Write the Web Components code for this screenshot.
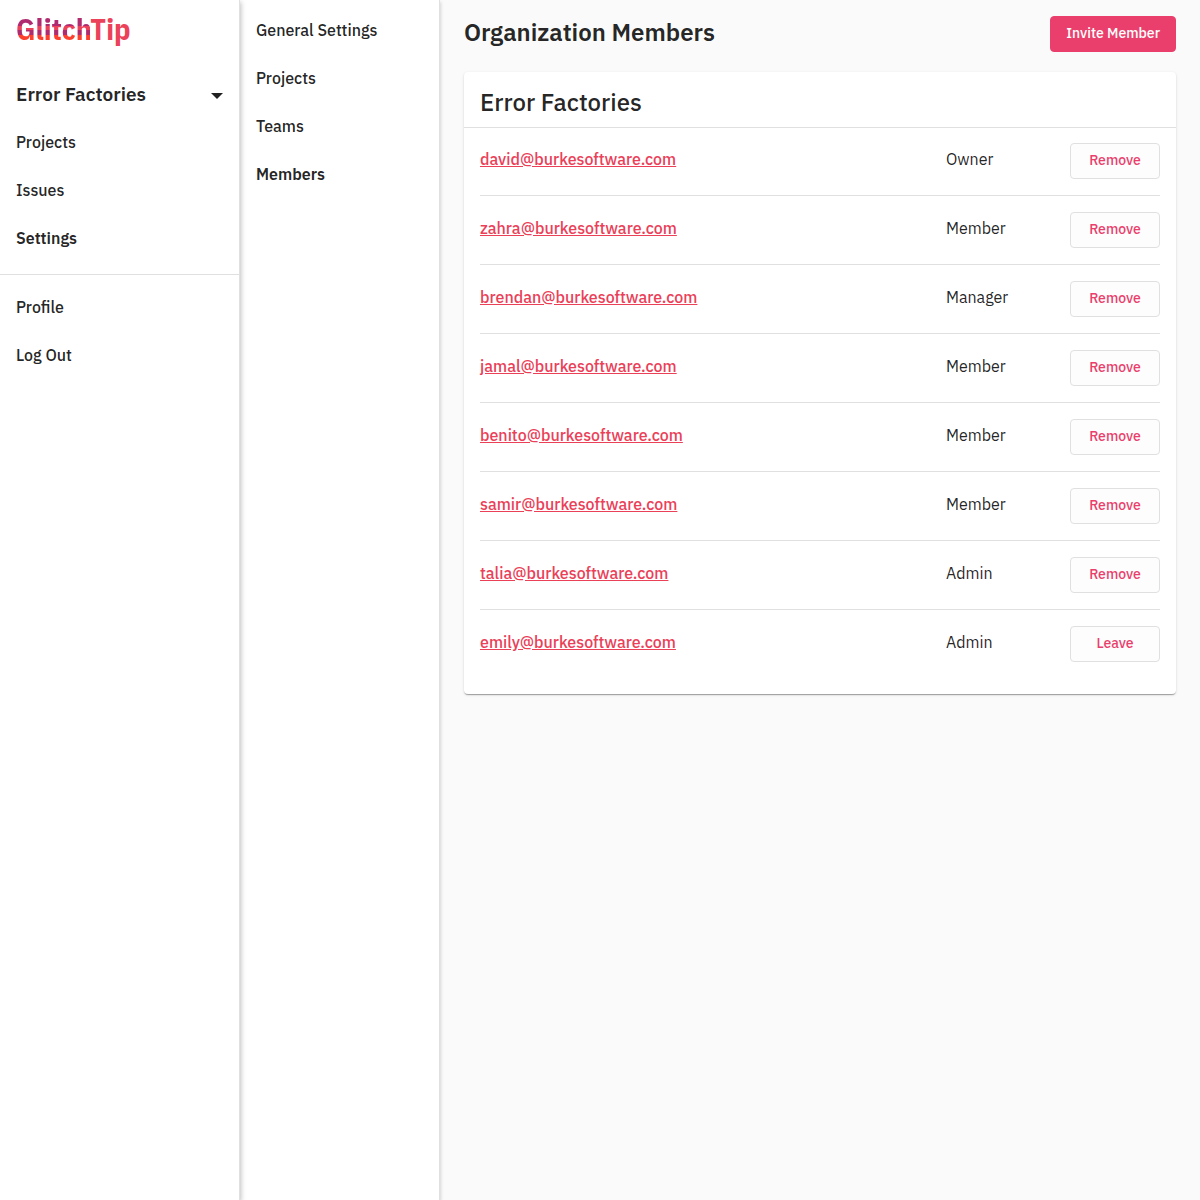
<!DOCTYPE html>
<html lang="en">
<head>
<meta charset="utf-8">
<title>GlitchTip</title>
<style>
  body {
    margin: 0;
    background: #fafafa;
    color: rgba(0, 0, 0, 0.87);
    font-family: "IBM Plex Sans", Roboto, sans-serif;
    font-size: 16px;
    --accent: #ea3f6c;
    --link: #ea4058;
    --divider: #e0e0e0;
  }
</style>
</head>
<body>
<gt-app>
  <gt-sidebar slot="nav">
    <gt-logo></gt-logo>
    <gt-org-menu>Error Factories</gt-org-menu>
    <gt-nav-item>Projects</gt-nav-item>
    <gt-nav-item>Issues</gt-nav-item>
    <gt-nav-item active>Settings</gt-nav-item>
    <gt-divider></gt-divider>
    <gt-nav-item>Profile</gt-nav-item>
    <gt-nav-item>Log Out</gt-nav-item>
  </gt-sidebar>
  <gt-sidebar slot="subnav" narrow>
    <gt-nav-item>General Settings</gt-nav-item>
    <gt-nav-item>Projects</gt-nav-item>
    <gt-nav-item>Teams</gt-nav-item>
    <gt-nav-item active>Members</gt-nav-item>
  </gt-sidebar>
  <gt-page-header>
    Organization Members
    <gt-button slot="action" primary>Invite Member</gt-button>
  </gt-page-header>
  <gt-card>
    <span slot="title">Error Factories</span>
    <gt-member email="david@burkesoftware.com" role-name="Owner" action="Remove"></gt-member>
    <gt-member email="zahra@burkesoftware.com" role-name="Member" action="Remove"></gt-member>
    <gt-member email="brendan@burkesoftware.com" role-name="Manager" action="Remove"></gt-member>
    <gt-member email="jamal@burkesoftware.com" role-name="Member" action="Remove"></gt-member>
    <gt-member email="benito@burkesoftware.com" role-name="Member" action="Remove"></gt-member>
    <gt-member email="samir@burkesoftware.com" role-name="Member" action="Remove"></gt-member>
    <gt-member email="talia@burkesoftware.com" role-name="Admin" action="Remove"></gt-member>
    <gt-member email="emily@burkesoftware.com" role-name="Admin" action="Leave"></gt-member>
  </gt-card>
</gt-app>

<script>
function define(name, html, setup) {
  const template = document.createElement('template');
  template.innerHTML = html;

  customElements.define(name, class extends HTMLElement {
    constructor() {
      super();
      this.attachShadow({ mode: 'open' }).appendChild(template.content.cloneNode(true));
    }

    connectedCallback() {
      if (setup) {
        setup(this, this.shadowRoot);
      }
    }
  });
}

define('gt-app', `
  <style>
    :host {
      display: grid;
      grid-template-columns: auto auto 1fr;
      min-height: 100vh;
    }
    main {
      padding: 16px 24px;
      min-width: 0;
    }
  </style>
  <slot name="nav"></slot>
  <slot name="subnav"></slot>
  <main><slot></slot></main>
`);

define('gt-sidebar', `
  <style>
    :host {
      display: block;
      box-sizing: border-box;
      width: 240px;
      padding-top: 6px;
      background: #fff;
      border-right: 1px solid var(--divider);
      box-shadow: 1px 2px 5px rgba(0, 0, 0, 0.25);
      z-index: 2;
    }
    :host([narrow]) {
      width: 200px;
      box-shadow: 1px 2px 3px rgba(0, 0, 0, 0.15);
      z-index: 1;
    }
  </style>
  <nav><slot></slot></nav>
`);

define('gt-logo', `
  <style>
    :host {
      display: block;
      padding: 0 16px;
      height: 64px;
    }
    a {
      display: inline-block;
      font-family: "IBM Plex Sans Condensed", "IBM Plex Sans", Roboto, sans-serif;
      font-size: 30px;
      line-height: 46px;
      font-weight: 700;
      text-decoration: none;
      color: #eb4159;
    }
    /* sliced colour bands over the first half of the name */
    span {
      color: transparent;
      -webkit-background-clip: text;
      background-clip: text;
      background-image:
        linear-gradient(#b02a6f 0 44%, #eb4159 44% 55%, #b02a6f 55% 67%, #fd3f2e 67%);
    }
  </style>
  <a href="#"><span>Glitch</span>Tip</a>
`);

define('gt-org-menu', `
  <style>
    :host { display: block; }
    button {
      display: flex;
      align-items: center;
      justify-content: space-between;
      width: 100%;
      height: 48px;
      padding: 0 16px;
      border: 0;
      background: none;
      color: inherit;
      font: inherit;
      font-size: 19px;
      font-weight: 600;
      cursor: pointer;
    }
    svg {
      width: 12px;
      height: 10px;
      fill: currentColor;
    }
  </style>
  <button type="button" aria-haspopup="menu">
    <slot></slot>
    <svg viewBox="0 0 12 10" aria-hidden="true"><path d="M0 4h12L6 10z"/></svg>
  </button>
`);

define('gt-nav-item', `
  <style>
    :host { display: block; }
    a {
      display: block;
      padding: 0 16px;
      line-height: 48px;
      color: inherit;
      font-weight: 500;
      text-decoration: none;
    }
    :host([active]) a { font-weight: 600; }
  </style>
  <a href="#"><slot></slot></a>
`);

define('gt-divider', `
  <style>
    :host {
      display: block;
      margin: 12px 0 8px;
      border-top: 1px solid var(--divider);
    }
  </style>
`);

define('gt-button', `
  <style>
    :host { display: block; }
    button {
      box-sizing: border-box;
      width: 100%;
      height: 36px;
      padding: 0 15px 2px;
      border: 1px solid var(--divider);
      border-radius: 4px;
      background: #fdfdfd;
      color: var(--accent);
      font: inherit;
      font-size: 14px;
      font-weight: 500;
      cursor: pointer;
    }
    :host([primary]) button {
      border-color: var(--accent);
      background: var(--accent);
      color: #fff;
    }
  </style>
  <button type="button"><slot></slot></button>
`);

define('gt-page-header', `
  <style>
    :host {
      display: flex;
      justify-content: space-between;
      margin-bottom: 20px;
    }
    h1 {
      margin: 0;
      font-size: 24px;
      font-weight: 600;
      line-height: 32px;
    }
  </style>
  <h1><slot></slot></h1>
  <slot name="action"></slot>
`);

define('gt-card', `
  <style>
    :host {
      display: block;
      border-radius: 4px;
      background: #fff;
      box-shadow: 0 2px 1px -1px rgba(0, 0, 0, 0.2),
        0 1px 1px rgba(0, 0, 0, 0.14),
        0 1px 3px rgba(0, 0, 0, 0.12);
    }
    h2 {
      margin: 0;
      padding: 14px 16px 9px;
      border-bottom: 1px solid var(--divider);
      font-size: 24px;
      font-weight: 500;
      line-height: 32px;
    }
    div { padding: 15px 16px 16px; }
  </style>
  <h2><slot name="title"></slot></h2>
  <div role="list"><slot></slot></div>
`);

define('gt-member', `
  <style>
    :host {
      display: grid;
      grid-template-columns: 1fr 124px 90px;
      align-items: start;
      padding-bottom: 16px;
      line-height: 32px;
    }
    :host(:not(:first-of-type)) {
      padding-top: 16px;
      border-top: 1px solid var(--divider);
    }
    a {
      color: var(--link);
      font-weight: 500;
    }
  </style>
  <div><a></a></div>
  <span></span>
  <gt-button></gt-button>
`, (el, root) => {
  const link = root.querySelector('a');
  const email = el.getAttribute('email');
  el.setAttribute('role', 'listitem');
  link.href = `mailto:${email}`;
  link.textContent = email;
  root.querySelector('span').textContent = el.getAttribute('role-name');
  root.querySelector('gt-button').textContent = el.getAttribute('action');
});
</script>
</body>
</html>
